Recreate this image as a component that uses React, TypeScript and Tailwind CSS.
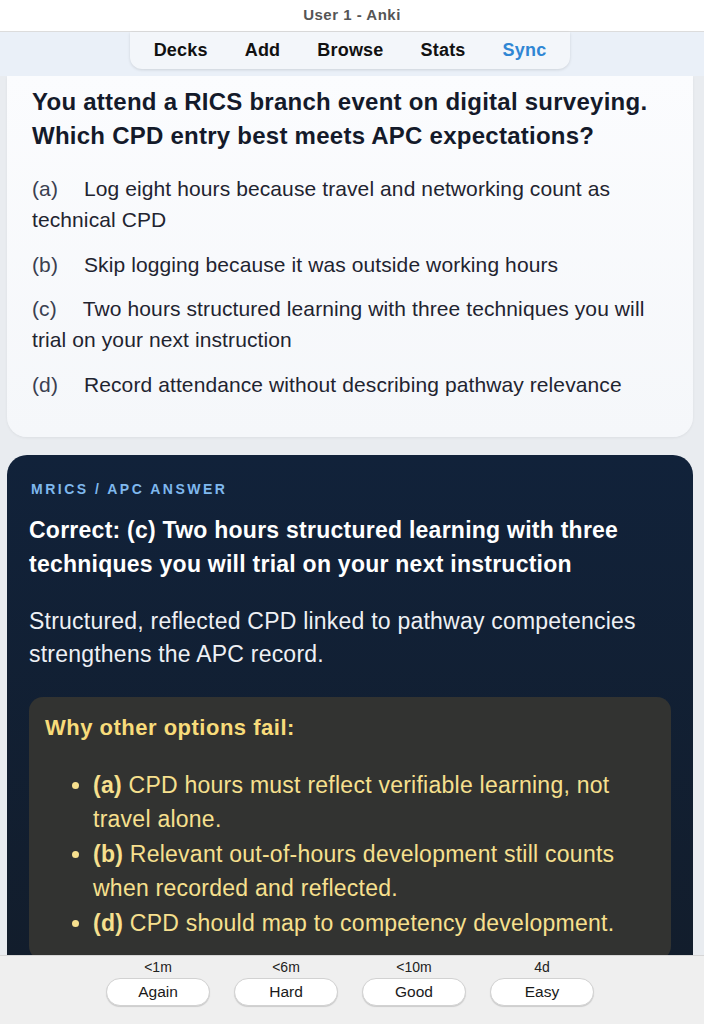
import React from 'react';

const options = [
    { key: 'a', text: 'Log eight hours because travel and networking count as technical CPD' },
    { key: 'b', text: 'Skip logging because it was outside working hours' },
    { key: 'c', text: 'Two hours structured learning with three techniques you will trial on your next instruction' },
    { key: 'd', text: 'Record attendance without describing pathway relevance' },
];

const fails = [
    { key: 'a', text: 'CPD hours must reflect verifiable learning, not travel alone.' },
    { key: 'b', text: 'Relevant out-of-hours development still counts when recorded and reflected.' },
    { key: 'd', text: 'CPD should map to competency development.' },
];

const answers = [
    { time: '<1m', label: 'Again' },
    { time: '<6m', label: 'Hard' },
    { time: '<10m', label: 'Good' },
    { time: '4d', label: 'Easy' },
];

const sans = { fontFamily: '"Liberation Sans", Arial, sans-serif' };

export default function App() {
    return (
        <div className="h-[1024px] w-[704px] overflow-hidden flex flex-col bg-[#e9ecf0]" style={sans}>
            {/* window title */}
            <div className="h-[32px] shrink-0 bg-white border-b border-[#dcdcdc] flex items-center justify-center text-[15px] font-bold tracking-[0.5px] text-[#555]">
                User 1 - Anki
            </div>

            {/* toolbar */}
            <div className="h-[44px] shrink-0 bg-[#eaf0f8] flex justify-center pr-[4px]">
                <nav className="w-[440px] h-[37px] bg-[#f3f6fa] rounded-b-[12px] shadow-[0_1px_3px_rgba(0,0,0,0.12)] flex items-center justify-center gap-[37px] text-[18px] font-bold tracking-[0.2px] text-[#111]">
                    <span>Decks</span>
                    <span>Add</span>
                    <span>Browse</span>
                    <span>Stats</span>
                    <span className="text-[#2f86d4]">Sync</span>
                </nav>
            </div>

            {/* review area */}
            <div className="flex-1 min-h-0 overflow-hidden pl-[7px] pr-[11px] flex flex-col gap-[18px]">
                <div className="shrink-0 bg-gradient-to-b from-[#fbfcfe] to-[#f5f7fa] rounded-b-[20px] shadow-[0_1px_3px_rgba(0,0,0,0.06)] px-[25px] pt-[9px] pb-[37px]">
                    <h1 className="text-[24px] leading-[34px] font-bold tracking-[0.25px] text-[#141a2a]">
                        You attend a RICS branch event on digital surveying. Which CPD entry best meets APC expectations?
                    </h1>
                    <div className="mt-[20px] flex flex-col gap-[13.5px] text-[21px] leading-[31px] tracking-[0.1px] text-[#1f2430]">
                        {options.map((o) => (
                            <p key={o.key}>
                                <span className="mr-[26px] text-[#3a4050]">({o.key})</span>
                                {o.text}
                            </p>
                        ))}
                    </div>
                </div>

                <div className="flex-1 bg-gradient-to-b from-[#11223a] to-[#121d2c] rounded-t-[20px] pl-[22px] pr-[22px] pt-[25px]">
                    <div className="pl-[2px] text-[14px] leading-[18px] font-bold tracking-[2.5px] text-[#7fb8ee]">MRICS / APC ANSWER</div>
                    <h2 className="mt-[15px] text-[23px] leading-[34px] font-bold tracking-[0.25px] text-white">
                        Correct: (c) Two hours structured learning with three techniques you will trial on your next instruction
                    </h2>
                    <p className="mt-[24px] text-[23px] leading-[33px] tracking-[0.22px] text-[#eef0f4]">
                        Structured, reflected CPD linked to pathway competencies strengthens the APC record.
                    </p>
                    <div className="mt-[26px] bg-[#323331] rounded-[14px] pl-[16px] pr-[15px] pt-[16px] pb-[20px]">
                        <div className="text-[22px] leading-[30px] font-bold tracking-[0.5px] text-[#f8dc7a]">Why other options fail:</div>
                        <ul className="mt-[25px] pl-[48px] text-[23px] leading-[34.5px] tracking-[0.25px] text-[#f7e08e] list-disc marker:text-[#f7e08e]">
                            {fails.map((f) => (
                                <li key={f.key}>
                                    <b>({f.key})</b> {f.text}
                                </li>
                            ))}
                        </ul>
                    </div>
                </div>
            </div>

            {/* answer buttons */}
            <div className="h-[69px] shrink-0 bg-[#efefef] border-t border-[#d6d6d6] flex justify-center gap-[24px] pt-[2px] pr-[4px]">
                {answers.map((a) => (
                    <div key={a.label} className="flex flex-col items-center">
                        <div className="text-[14px] leading-[18px] text-[#222]">{a.time}</div>
                        <button className="mt-[2px] w-[104px] h-[28px] rounded-full bg-white border border-[#d2d2d2] shadow-[0_1px_1px_rgba(0,0,0,0.15)] text-[15.5px] text-[#1a1a1a]">
                            {a.label}
                        </button>
                    </div>
                ))}
            </div>
        </div>
    );
}
